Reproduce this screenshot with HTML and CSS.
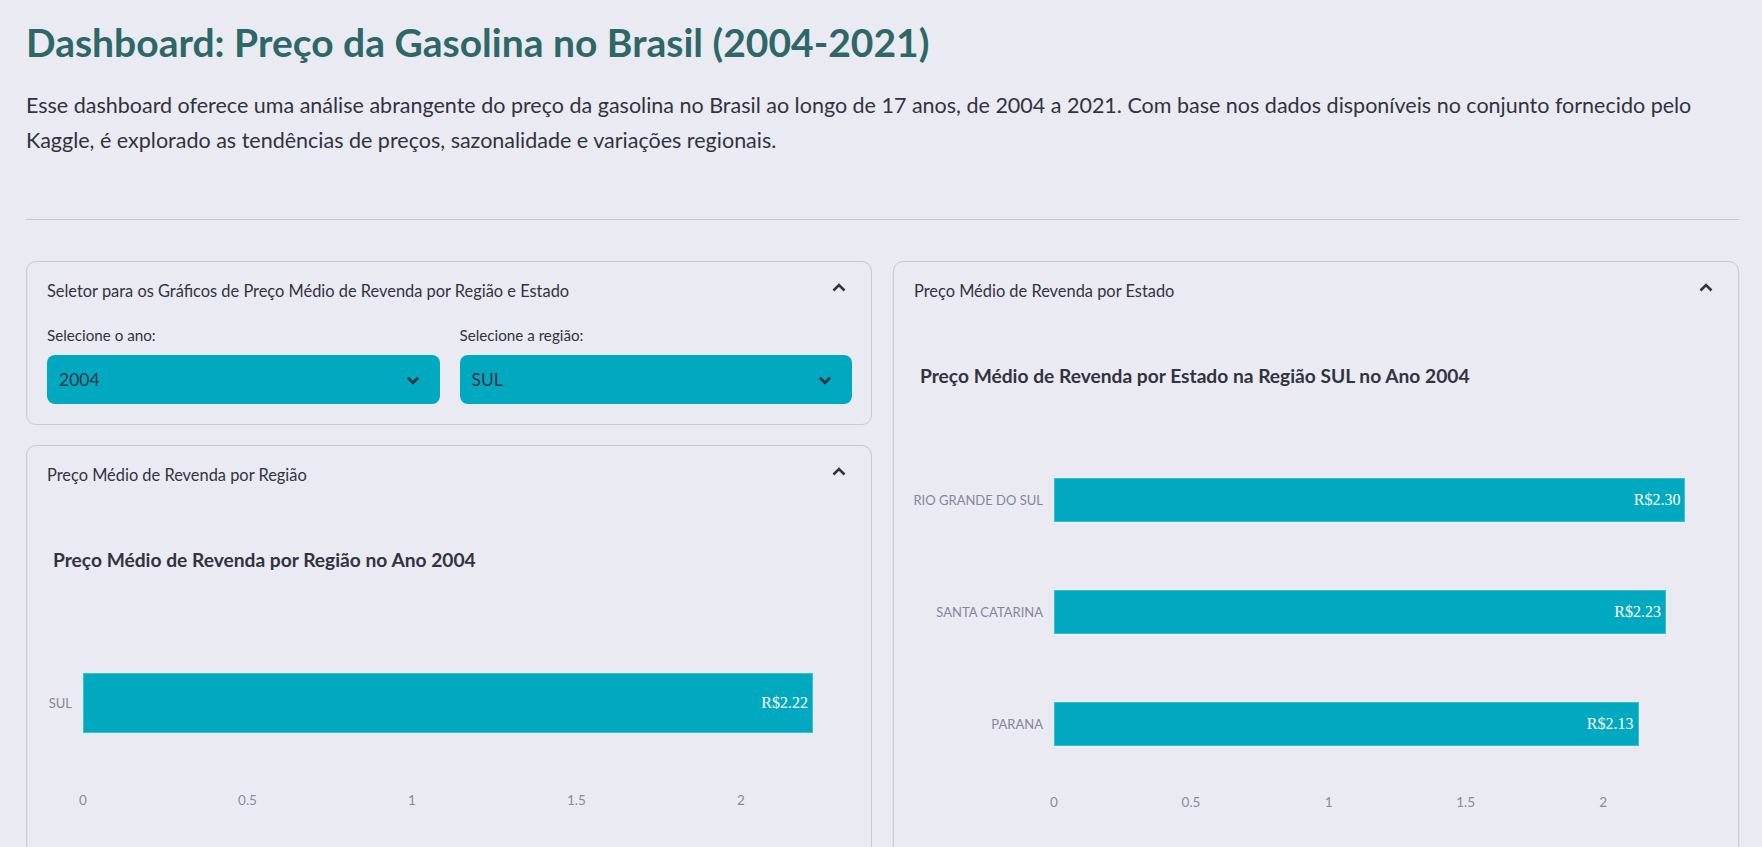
FILE: index.html
```html
<!DOCTYPE html>
<html lang="pt-BR">
<head>
<meta charset="utf-8">
<title>Dashboard: Preço da Gasolina no Brasil (2004-2021)</title>
<link rel="stylesheet" href="styles.css">
</head>
<body>
<main class="app">
  <h1 class="title">Dashboard: Preço da Gasolina no Brasil (2004-2021)</h1>
  <p class="intro">Esse dashboard oferece uma análise abrangente do preço da gasolina no Brasil ao longo de 17 anos, de 2004 a 2021. Com base nos dados disponíveis no conjunto fornecido pelo Kaggle, é explorado as tendências de preços, sazonalidade e variações regionais.</p>
  <hr class="divider">

  <div class="columns">
    <div class="col">
      <section class="expander">
        <div class="exp-head">
          <span>Seletor para os Gráficos de Preço Médio de Revenda por Região e Estado</span>
          <svg class="chev" viewBox="0 0 24 24" width="24" height="24"><polyline points="6.5,14.5 12,9 17.5,14.5"/></svg>
        </div>
        <div class="selectors">
          <div class="field">
            <label class="field-label">Selecione o ano:</label>
            <div class="select">
              <span>2004</span>
              <svg class="chev-down" viewBox="0 0 24 24" width="22" height="22"><polyline points="6.5,9.5 12,15 17.5,9.5"/></svg>
            </div>
          </div>
          <div class="field">
            <label class="field-label">Selecione a região:</label>
            <div class="select">
              <span>SUL</span>
              <svg class="chev-down" viewBox="0 0 24 24" width="22" height="22"><polyline points="6.5,9.5 12,15 17.5,9.5"/></svg>
            </div>
          </div>
        </div>
      </section>

      <section class="expander">
        <div class="exp-head">
          <span>Preço Médio de Revenda por Região</span>
          <svg class="chev" viewBox="0 0 24 24" width="24" height="24"><polyline points="6.5,14.5 12,9 17.5,14.5"/></svg>
        </div>
        <div class="chart">
          <h3 class="chart-title">Preço Médio de Revenda por Região no Ano 2004</h3>
          <div class="plot plot-region">
            <span class="cat">SUL</span>
            <div class="track track-single"><div class="bar" style="width:94.93%"><span class="val">R$2.22</span></div></div>
            <span></span>
            <div class="axis">
              <span class="tick" style="left:0%">0</span>
              <span class="tick" style="left:21.39%">0.5</span>
              <span class="tick" style="left:42.78%">1</span>
              <span class="tick" style="left:64.17%">1.5</span>
              <span class="tick" style="left:85.56%">2</span>
            </div>
          </div>
        </div>
      </section>
    </div>

    <div class="col">
      <section class="expander">
        <div class="exp-head">
          <span>Preço Médio de Revenda por Estado</span>
          <svg class="chev" viewBox="0 0 24 24" width="24" height="24"><polyline points="6.5,14.5 12,9 17.5,14.5"/></svg>
        </div>
        <div class="chart">
          <h3 class="chart-title">Preço Médio de Revenda por Estado na Região SUL no Ano 2004</h3>
          <div class="plot plot-state">
            <span class="cat">RIO GRANDE DO SUL</span>
            <div class="track"><div class="bar" style="width:94.96%"><span class="val">R$2.30</span></div></div>
            <span class="cat">SANTA CATARINA</span>
            <div class="track"><div class="bar" style="width:92.03%"><span class="val">R$2.23</span></div></div>
            <span class="cat">PARANA</span>
            <div class="track"><div class="bar" style="width:87.9%"><span class="val">R$2.13</span></div></div>
            <span></span>
            <div class="axis">
              <span class="tick" style="left:0%">0</span>
              <span class="tick" style="left:20.6%">0.5</span>
              <span class="tick" style="left:41.3%">1</span>
              <span class="tick" style="left:61.9%">1.5</span>
              <span class="tick" style="left:82.6%">2</span>
            </div>
          </div>
        </div>
      </section>
    </div>
  </div>
</main>
</body>
</html>
```

FILE: styles.css
```css
* { box-sizing: border-box; }

body {
  margin: 0;
  background: #eaeaf2;
  color: #31333f;
  font-family: Lato, "Noto Sans", sans-serif;
}

.app {
  padding: 20px 23px 0 26px;
}

.title {
  margin: 0;
  font-size: 39px;
  line-height: 44px;
  font-weight: 700;
  color: #2e6767;
}

.intro {
  margin: 24px 0 0;
  font-size: 21.5px;
  line-height: 35px;
}

.divider {
  margin: 61px 0 41px;
  border: 0;
  border-top: 1px solid #c6c6d0;
  height: 0;
}

.columns {
  display: grid;
  grid-template-columns: 1fr 1fr;
  column-gap: 21px;
}

.col {
  display: flex;
  flex-direction: column;
  gap: 20px;
}

.expander {
  border: 1px solid #c8c8d2;
  border-radius: 10px;
}

.exp-head {
  height: 56px;
  display: flex;
  align-items: center;
  justify-content: space-between;
  padding: 0 20px 0 20px;
  font-size: 16.4px;
}

.chev {
  fill: none;
  stroke: #31333f;
  stroke-width: 2.6;
  margin-bottom: 4px;
}

.selectors {
  display: grid;
  grid-template-columns: 1fr 1fr;
  column-gap: 20px;
  padding: 5px 19px 20px 20px;
}

.field-label {
  display: block;
  font-size: 15.2px;
  line-height: 24px;
  margin-bottom: 8px;
}

.select {
  height: 49px;
  border-radius: 8px;
  background: #00a9bf;
  display: flex;
  align-items: center;
  justify-content: space-between;
  padding: 0 16px 0 12px;
  font-size: 17.5px;
}

.chev-down {
  fill: none;
  stroke: #31333f;
  stroke-width: 3;
}

.chart {
  padding: 46px 19px 60px 20px;
}

.chart-title {
  margin: 0 0 56px 6px;
  font-size: 19.2px;
  line-height: 24px;
  font-weight: 700;
  color: #31333f;
}

.plot {
  display: grid;
  column-gap: 11px;
}

.plot-region { grid-template-columns: 25px 1fr; }
.plot-state { grid-template-columns: 129px 1fr; }

.cat {
  align-self: center;
  justify-self: end;
  white-space: nowrap;
  font-size: 13px;
  color: #85859a;
}

.track {
  height: 112px;
  display: flex;
  align-items: center;
}

.track-single { height: 150px; }

.bar {
  height: 40%;
  background: #00a9bf;
  box-shadow: inset 0 0 0 1px #3cbfd2;
  display: flex;
  align-items: center;
  justify-content: flex-end;
  padding-right: 5px;
}

.val {
  font-family: "Liberation Serif", "Times New Roman", serif;
  font-size: 16px;
  color: #ffffff;
}

.axis {
  position: relative;
  height: 44px;
}

.tick {
  position: absolute;
  top: 13px;
  line-height: 18px;
  transform: translateX(-50%);
  font-size: 13.5px;
  color: #8a8a9c;
}
```
